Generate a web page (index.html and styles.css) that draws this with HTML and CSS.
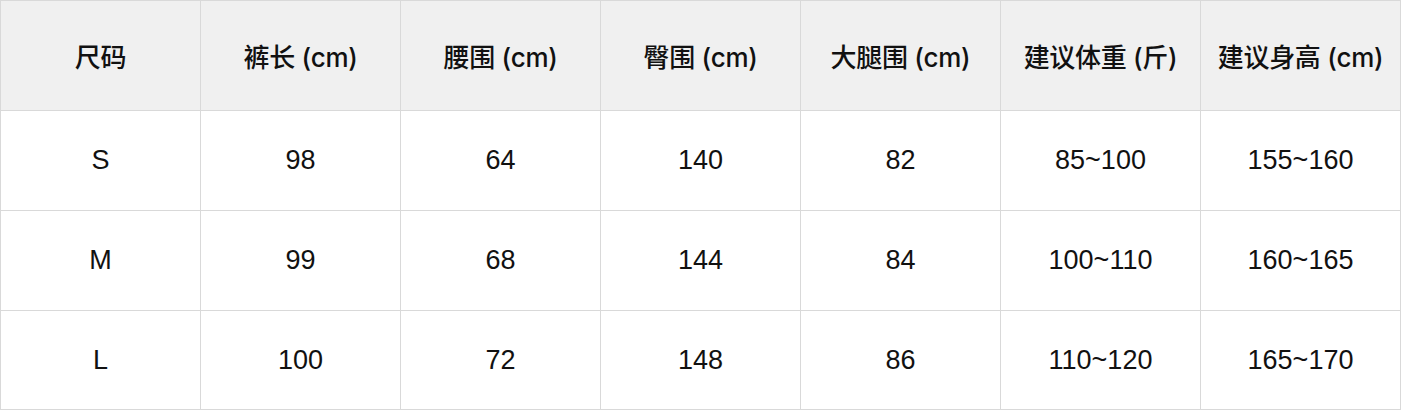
FILE: index.html
```html
<!DOCTYPE html>
<html lang="zh-CN">
<head>
<meta charset="utf-8">
<title>尺码表</title>
<link rel="stylesheet" href="styles.css">
</head>
<body>
<table class="size-table">
  <thead>
    <tr>
      <th>尺码</th>
      <th>裤长 (cm)</th>
      <th>腰围 (cm)</th>
      <th>臀围 (cm)</th>
      <th>大腿围 (cm)</th>
      <th>建议体重 (斤)</th>
      <th>建议身高 (cm)</th>
    </tr>
  </thead>
  <tbody>
    <tr><td>S</td><td>98</td><td>64</td><td>140</td><td>82</td><td>85~100</td><td>155~160</td></tr>
    <tr><td>M</td><td>99</td><td>68</td><td>144</td><td>84</td><td>100~110</td><td>160~165</td></tr>
    <tr class="last"><td>L</td><td>100</td><td>72</td><td>148</td><td>86</td><td>110~120</td><td>165~170</td></tr>
  </tbody>
</table>
</body>
</html>
```
FILE: styles.css
```css
html, body {
  margin: 0;
  padding: 0;
  background: #ffffff;
}

.size-table {
  border-collapse: collapse;
  table-layout: fixed;
  font-family: "Liberation Sans", "Noto Sans CJK SC", sans-serif;
  font-size: 27px;
  color: #111111;
}

.size-table th,
.size-table td {
  width: 199px;
  border: 1px solid #d9d9d9;
  text-align: center;
  vertical-align: middle;
  padding: 0;
}

.size-table th {
  height: 109px;
  background: #f0f0f0;
  font-family: "Inter", "Noto Sans CJK SC", sans-serif;
  font-size: 26px;
  font-weight: 500;
  white-space: nowrap;
  letter-spacing: -0.3px;
}

.size-table td {
  height: 99px;
  font-weight: 400;
}

.size-table tr.last td {
  height: 98px;
}
```
